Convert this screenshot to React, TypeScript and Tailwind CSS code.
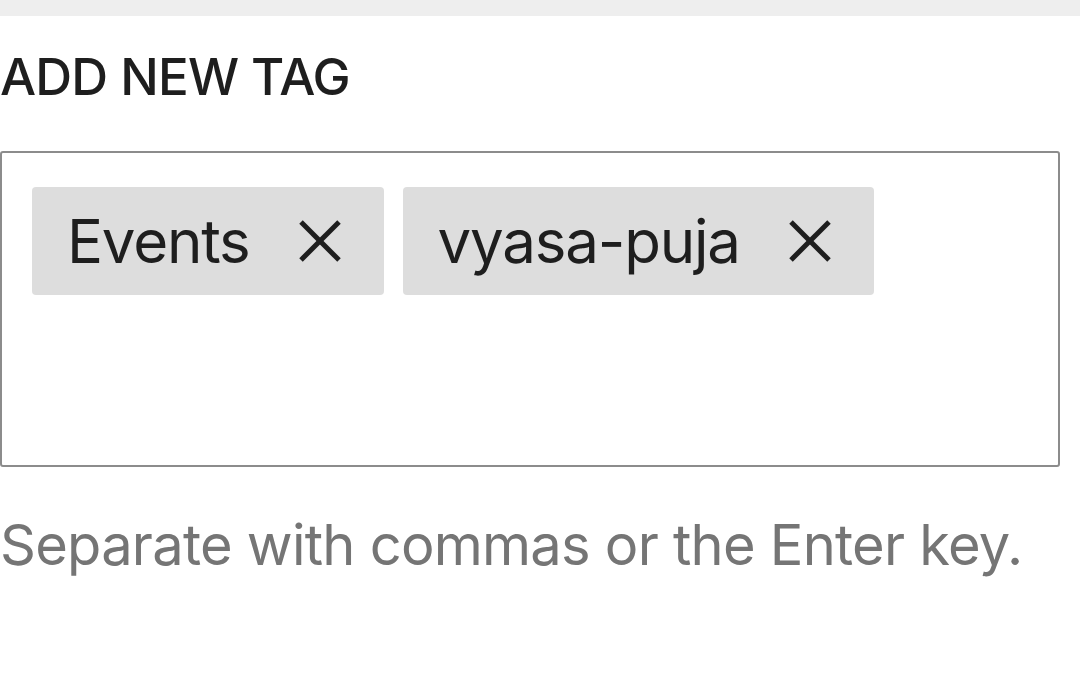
const tags = ['Events', 'vyasa-puja'];

function CloseIcon() {
  return (
    <svg width="46" height="46" viewBox="0 0 46 46" fill="none" stroke="#1e1e1e" strokeWidth="5">
      <line x1="4" y1="4" x2="42" y2="42" />
      <line x1="42" y1="4" x2="4" y2="42" />
    </svg>
  );
}

export default function App() {
  return (
    <div className="h-[675px] w-[1080px] overflow-hidden bg-white font-['Inter',sans-serif]">
      <div className="h-4 bg-[#eeeeee]" />

      <div className="pt-[31px]">
        <label className="block text-[51px] font-medium uppercase leading-[60px] tracking-[-0.8px] text-[#1e1e1e]">
          Add new tag
        </label>

        <div className="mt-11 h-[316px] w-[1060px] rounded-[3px] border-2 border-[#8c8c8c] px-[30px] pt-[34px]">
          <div className="flex flex-wrap gap-[19px]">
            {tags.map((tag) => (
              <span
                key={tag}
                className="flex h-[108px] items-center rounded-[4px] bg-[#dddddd] pl-[35px] pr-[41px] text-[60px] leading-[108px] tracking-[-1.2px] text-[#1e1e1e]"
              >
                {tag}
                <button type="button" aria-label={`Remove ${tag}`} className="ml-[47px] flex items-center">
                  <CloseIcon />
                </button>
              </span>
            ))}
          </div>
        </div>

        <p className="mt-11 text-[56px] leading-[68px] tracking-[-0.75px] text-[#757575]">
          Separate with commas or the Enter key.
        </p>
      </div>
    </div>
  );
}
